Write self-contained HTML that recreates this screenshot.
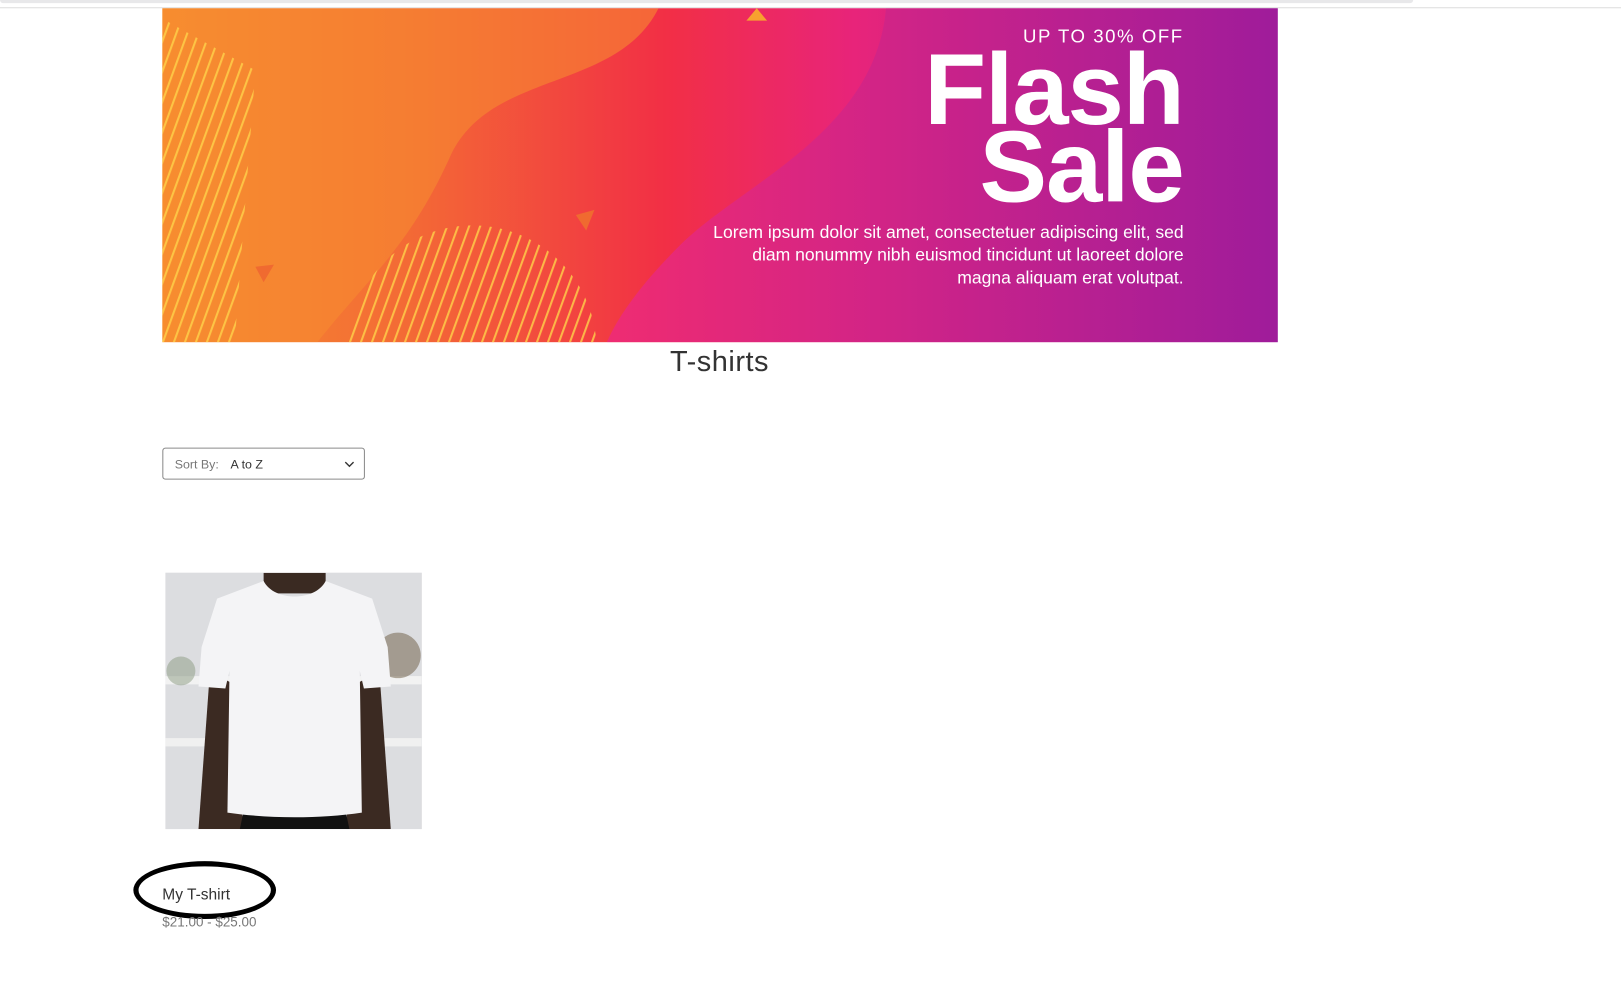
<!DOCTYPE html>
<html><head><meta charset="utf-8">
<style>
html,body{margin:0;padding:0;background:#fff;width:1621px;height:998px;overflow:hidden;font-family:"Liberation Sans",sans-serif;}
#wrap{position:absolute;left:0;top:0;width:1568px;height:966px;transform:scale(1.0338);transform-origin:0 0;}
.topbar{position:absolute;left:0;top:0;width:1367px;height:3px;background:#e8e8ea;border-radius:0 0 3px 3px;}
.topline{position:absolute;left:0;top:7px;width:1568px;height:1px;background:#ddd;}
.banner{position:absolute;left:157px;top:8px;width:1079px;height:323px;overflow:hidden;
background:linear-gradient(90deg,#f7912f 0%,#f36a35 22%,#f22f45 45%,#e8247a 62%,#c11f8e 80%,#9a1a9c 100%);}
h1{position:absolute;left:0;width:1392px;top:334px;margin:0;text-align:center;font-weight:normal;font-size:28px;color:#333;letter-spacing:0.5px;}
.sort{position:absolute;left:157px;top:433px;width:194px;height:29px;border:1px solid #8a8a8a;border-radius:3px;font-size:12px;}
.sort .l{position:absolute;left:11px;top:8px;color:#777;}
.sort .v{position:absolute;left:65px;top:8px;color:#333;}
.sort svg{position:absolute;left:175px;top:12px;}
.prod{position:absolute;left:160px;top:554px;width:248px;height:248px;overflow:hidden;background:#d9dadd;}
.name{position:absolute;left:157px;top:857px;font-size:15px;color:#333;}
.price{position:absolute;left:157px;top:884px;font-size:13px;color:#777;}
.ell{position:absolute;left:129px;top:833px;width:128px;height:46px;border:5px solid #000;border-radius:50%;}
</style></head><body>
<div id="wrap">
<div class="topbar"></div><div class="topline"></div>
<div class="banner">
<svg width="1079" height="323" style="position:absolute;left:0;top:0">
<defs>
<pattern id="st" width="10" height="10" patternUnits="userSpaceOnUse" patternTransform="rotate(20)"><rect width="2" height="10" fill="#ffd24a" opacity="0.8"/></pattern>
<linearGradient id="pg" x1="0" x2="1"><stop offset="0" stop-color="#ee2a7b"/><stop offset="1" stop-color="#a01c9a"/></linearGradient>
</defs>
<path d="M0,0 L480,0 C440,80 320,60 280,140 C240,230 200,260 150,323 L0,323 Z" fill="#f68a30" opacity="0.6"/>
<path d="M700,0 C690,120 560,170 500,230 C460,270 440,300 430,323 L1079,323 L1079,0 Z" fill="url(#pg)" opacity="0.85"/>
<path d="M0,10 L90,60 L70,323 L0,323 Z" fill="url(#st)"/>
<circle cx="300" cy="330" r="120" fill="url(#st)"/>
<polygon points="565,12 585,12 575,0" fill="#f7a12f"/>
<polygon points="400,200 418,195 410,215" fill="#f06a30"/>
<polygon points="90,250 108,248 98,265" fill="#f06a30"/>
<text x="988" y="33" text-anchor="end" fill="#fff" font-size="18" font-family="Liberation Sans,sans-serif" letter-spacing="1.5">UP TO 30% OFF</text>
<text x="988" y="112" text-anchor="end" fill="#fff" font-size="98" font-weight="bold" font-family="Liberation Sans,sans-serif" letter-spacing="-1">Flash</text>
<text x="988" y="187" text-anchor="end" fill="#fff" font-size="98" font-weight="bold" font-family="Liberation Sans,sans-serif" letter-spacing="-1">Sale</text>
<text x="988" y="222" text-anchor="end" fill="#fff" font-size="17" font-family="Liberation Sans,sans-serif">Lorem ipsum dolor sit amet, consectetuer adipiscing elit, sed</text>
<text x="988" y="244" text-anchor="end" fill="#fff" font-size="17" font-family="Liberation Sans,sans-serif">diam nonummy nibh euismod tincidunt ut laoreet dolore</text>
<text x="988" y="266" text-anchor="end" fill="#fff" font-size="17" font-family="Liberation Sans,sans-serif">magna aliquam erat volutpat.</text>
</svg>
</div>
<h1>T-shirts</h1>
<div class="sort"><span class="l">Sort By:</span><span class="v">A to Z</span>
<svg width="10" height="7" viewBox="0 0 10 7"><path d="M1,1 L5,5 L9,1" stroke="#333" stroke-width="1.3" fill="none"/></svg></div>
<div class="prod">
<svg width="248" height="248">
<rect width="248" height="248" fill="#dcdde0"/>
<rect x="0" y="100" width="248" height="8" fill="#f2f2f2"/>
<rect x="0" y="160" width="248" height="8" fill="#f0f0f0"/>
<circle cx="225" cy="80" r="22" fill="#6a5a40" opacity="0.5"/>
<circle cx="15" cy="95" r="14" fill="#8a9a80" opacity="0.5"/>
<rect x="95" y="0" width="60" height="20" fill="#3a2a22"/>
<path d="M32,248 L42,110 L52,100 L70,110 L75,248 Z" fill="#3b2a22"/>
<path d="M218,248 L208,110 L198,100 L180,110 L175,248 Z" fill="#3b2a22"/>
<path d="M72,248 L80,210 L170,210 L178,248 Z" fill="#111"/>
<path d="M95,8 C105,28 145,28 155,8 L200,25 L215,72 L218,110 L192,112 L188,95 L190,232 C150,238 100,238 60,232 L62,95 L58,112 L32,110 L35,72 L50,25 Z" fill="#f4f4f6"/>
</svg>
</div>
<div class="ell"></div>
<div class="name">My T-shirt</div>
<div class="price">$21.00 - $25.00</div>
</div>
</body></html>
